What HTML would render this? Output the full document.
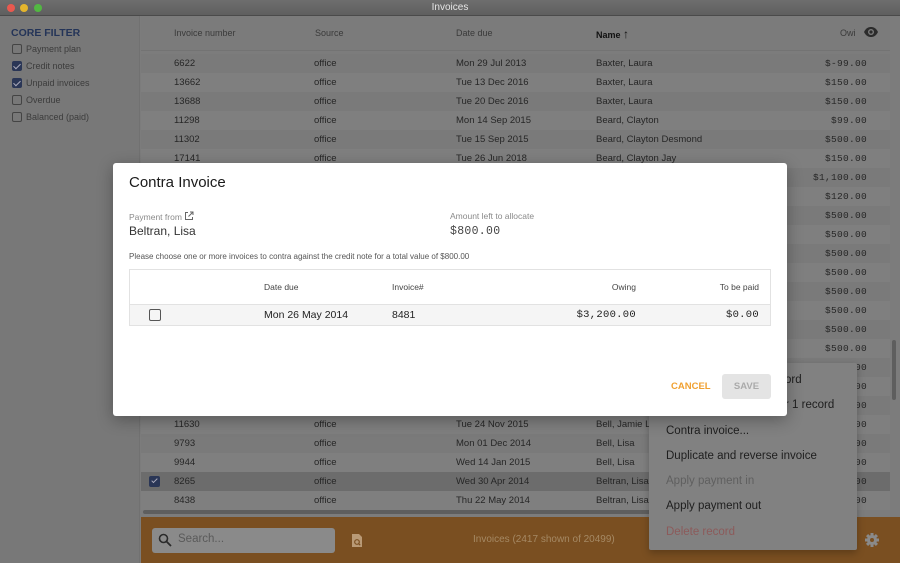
<!DOCTYPE html>
<html><head><meta charset="utf-8"><style>
*{margin:0;padding:0;box-sizing:border-box}
body{width:900px;height:563px;overflow:hidden;background:#7c7c7c;font-family:"Liberation Sans",sans-serif;position:relative;color:#2b2b2b}
.title{position:absolute;left:0;top:0;width:900px;height:16px;background:linear-gradient(#6e6e6e,#5f5f5f);color:#e6e6e6;font-size:10px;text-align:center;line-height:16px;border-bottom:1px solid #4a4a4a}
.dot{position:absolute;top:4px;width:8px;height:8px;border-radius:50%}
.side{position:absolute;left:0;top:16px;width:140px;height:547px;background:#787878;border-right:1px solid #717171}
.side h4{position:absolute;left:11px;top:11px;font-size:10.5px;color:#243458;font-weight:bold}
.cb{position:absolute;left:12px;width:10px;height:10px;border:1px solid #444;border-radius:2px}
.cb.on{background:#2a3656;border-color:#2a3656}
.cb.on:after{content:"";position:absolute;left:2px;top:0px;width:3px;height:6px;border:solid #aab;border-width:0 1.5px 1.5px 0;transform:rotate(45deg)}
.fl{position:absolute;left:26px;font-size:9px;color:#3c3c3c}
.main{position:absolute;left:141px;top:16px;width:749px;height:500px}
.hd{position:absolute;top:0;left:0;width:749px;height:35px;background:#7b7b7b;border-bottom:1px solid #737373;font-size:9px;color:#3a3a3a}
.hd span,.r span{position:absolute}
.r{position:absolute;left:0;width:749px;height:19px;font-size:9.5px;line-height:19px;color:#262626}
.mono{font-family:"Liberation Mono",monospace;letter-spacing:.3px}
.bar{position:absolute;left:141px;top:517px;width:759px;height:46px;background:#7a4f21}
.modal{position:absolute;left:113px;top:163px;width:674px;height:253px;background:#fff;border-radius:3px;box-shadow:0 4px 16px rgba(0,0,0,.3)}
.menu{position:absolute;left:649px;top:363px;width:208px;height:187px;background:#818181;box-shadow:0 3px 8px rgba(0,0,0,.25);border-radius:2px}
.mi{position:absolute;left:17px;font-size:11.5px;color:#1e1e1e}
</style></head><body>
<div class="title">Invoices<div class="dot" style="left:7px;background:#e9594f"></div><div class="dot" style="left:20px;background:#e4b52d"></div><div class="dot" style="left:34px;background:#52b842"></div></div>
<div class="side"><h4>CORE FILTER</h4>
<div class="cb" style="top:28px"></div><div class="fl" style="top:28px">Payment plan</div>
<div class="cb on" style="top:45px"></div><div class="fl" style="top:45px">Credit notes</div>
<div class="cb on" style="top:62px"></div><div class="fl" style="top:62px">Unpaid invoices</div>
<div class="cb" style="top:79px"></div><div class="fl" style="top:79px">Overdue</div>
<div class="cb" style="top:96px"></div><div class="fl" style="top:96px">Balanced (paid)</div>
</div>
<div class="main">
<div class="hd"><span style="left:33px;top:12px">Invoice number</span><span style="left:174px;top:12px">Source</span><span style="left:315px;top:12px">Date due</span><span style="left:455px;top:11px;color:#111;font-weight:bold">Name <span style="position:static;font-size:12px;font-weight:normal">&#8593;</span></span><span style="left:699px;top:12px">Owi</span>
<svg style="position:absolute;left:722px;top:10px" width="16" height="12" viewBox="0 0 16 12"><path d="M1 6C3 2 5.5 1 8 1s5 1 7 5c-2 4-4.5 5-7 5S3 10 1 6z" fill="#2b2b2b"/><circle cx="8" cy="6" r="3" fill="#7b7b7b"/><circle cx="8" cy="6" r="1.6" fill="#2b2b2b"/></svg></div>
<div id="rows"></div>
<div style="position:absolute;left:2px;top:494px;width:600px;height:4px;border-radius:2px;background:#5e5e5e"></div>
</div>
<div style="position:absolute;left:892px;top:340px;width:4px;height:60px;border-radius:2px;background:#5e5e5e"></div>
<script>
var d=[["6622","office","Mon 29 Jul 2013","Baxter, Laura","$-99.00"],["13662","office","Tue 13 Dec 2016","Baxter, Laura","$150.00"],["13688","office","Tue 20 Dec 2016","Baxter, Laura","$150.00"],["11298","office","Mon 14 Sep 2015","Beard, Clayton","$99.00"],["11302","office","Tue 15 Sep 2015","Beard, Clayton Desmond","$500.00"],["17141","office","Tue 26 Jun 2018","Beard, Clayton Jay","$150.00"],["","","","","$1,100.00"],["","","","","$120.00"]];
for(var i=0;i<8;i++)d.push(["","","","","$500.00"]);
for(i=0;i<3;i++)d.push(["","","","","$500.00"]);
d.push(["11630","office","Tue 24 Nov 2015","Bell, Jamie L","$500.00"],["9793","office","Mon 01 Dec 2014","Bell, Lisa","$500.00"],["9944","office","Wed 14 Jan 2015","Bell, Lisa","$500.00"],["8265","office","Wed 30 Apr 2014","Beltran, Lisa","$500.00"],["8438","office","Thu 22 May 2014","Beltran, Lisa","$500.00"]);
var h="";for(i=0;i<d.length;i++){var bg=i==22?"#6c6c6c":(i%2?"#7f7f7f":"#7a7a7a");
h+='<div class="r" style="top:'+(38+19*i)+'px;background:'+bg+'">'+(i==22?'<span style="left:8px;top:4px;width:11px;height:11px;background:#2a3656;border-radius:2px"></span><span style="left:12px;top:5px;width:3px;height:6px;border:solid #aab;border-width:0 1.5px 1.5px 0;transform:rotate(45deg)"></span>':'')+'<span style="left:33px">'+d[i][0]+'</span><span style="left:173px">'+d[i][1]+'</span><span style="left:315px">'+d[i][2]+'</span><span style="left:455px">'+d[i][3]+'</span><span class="mono" style="right:23px">'+d[i][4]+'</span></div>';}
document.getElementById("rows").innerHTML=h;
</script>
<div class="bar">
<div style="position:absolute;left:11px;top:11px;width:183px;height:25px;background:#8a8a8a;border-radius:3px"></div>
<svg style="position:absolute;left:17px;top:16px" width="14" height="14" viewBox="0 0 14 14"><circle cx="5.5" cy="5.5" r="4" fill="none" stroke="#2a2a2a" stroke-width="1.6"/><path d="M8.5 8.5L13 13" stroke="#2a2a2a" stroke-width="1.8"/></svg>
<div style="position:absolute;left:37px;top:16px;font-size:11.5px;color:#5a5a5a">Search...</div>
<svg style="position:absolute;left:210px;top:16px" width="12" height="15" viewBox="0 0 12 15"><path d="M1 1h7l3 3v10H1z" fill="#b99a76"/><circle cx="6" cy="9" r="2.3" fill="none" stroke="#7a4f21" stroke-width="1.2"/><path d="M7.6 10.6l1.6 1.6" stroke="#7a4f21" stroke-width="1.2"/></svg>
<div style="position:absolute;left:332px;top:17px;font-size:10px;color:#a58964">Invoices (2417 shown of 20499)</div>
<svg style="position:absolute;left:723px;top:15px" width="16" height="16" viewBox="0 0 16 16"><g fill="#8a8a8a"><circle cx="8" cy="8" r="5"/><rect x="6.5" y="1" width="3" height="14"/><rect x="1" y="6.5" width="14" height="3"/><rect x="6.5" y="1" width="3" height="14" transform="rotate(45 8 8)"/><rect x="6.5" y="1" width="3" height="14" transform="rotate(-45 8 8)"/></g><circle cx="8" cy="8" r="2" fill="#7a4f21"/></svg>
</div>
<div class="menu">
<div class="mi" style="top:11px;left:136px">ord</div>
<div class="mi" style="top:36px;left:136px">r 1 record</div>
<div class="mi" style="top:62px">Contra invoice...</div>
<div class="mi" style="top:87px">Duplicate and reverse invoice</div>
<div class="mi" style="top:112px;color:#5f5f5f">Apply payment in</div>
<div class="mi" style="top:137px">Apply payment out</div>
<div class="mi" style="top:163px;color:#8c5a5a">Delete record</div>
</div>
<div class="modal">
<div style="position:absolute;left:16px;top:11px;font-size:15px;color:#1a1a1a;font-weight:500">Contra Invoice</div>
<div style="position:absolute;left:16px;top:48px;font-size:8.5px;color:#8a8a8a">Payment from <svg width="10" height="10" viewBox="0 0 10 10" style="vertical-align:-1px"><path d="M4 1.5H1.5v7h7V6M6 1h3v3M9 1L4.5 5.5" fill="none" stroke="#666" stroke-width="1"/></svg></div>
<div style="position:absolute;left:16px;top:61px;font-size:12px;color:#333">Beltran, Lisa</div>
<div style="position:absolute;left:337px;top:48px;font-size:8.5px;color:#8a8a8a">Amount left to allocate</div>
<div class="mono" style="position:absolute;left:337px;top:62px;font-size:11.5px;color:#444">$800.00</div>
<div style="position:absolute;left:16px;top:89px;font-size:8px;color:#555">Please choose one or more invoices to contra against the credit note for a total value of $800.00</div>
<div style="position:absolute;left:16px;top:106px;width:642px;height:57px;border:1px solid #e2e2e2">
<div style="position:absolute;left:0;top:0;width:640px;height:35px;border-bottom:1px solid #e2e2e2;font-size:8.5px;color:#444">
<span style="position:absolute;left:134px;top:12px">Date due</span><span style="position:absolute;left:262px;top:12px">Invoice#</span><span style="position:absolute;right:134px;top:12px">Owing</span><span style="position:absolute;right:11px;top:12px">To be paid</span></div>
<div style="position:absolute;left:0;top:35px;width:640px;height:20px;background:#f5f5f5;font-size:10.5px;color:#222;line-height:20px">
<span style="position:absolute;left:19px;top:4px;width:12px;height:12px;border:1.5px solid #555;border-radius:2px"></span>
<span style="position:absolute;left:134px">Mon 26 May 2014</span><span style="position:absolute;left:262px">8481</span><span class="mono" style="position:absolute;right:134px">$3,200.00</span><span class="mono" style="position:absolute;right:11px">$0.00</span></div></div>
<div style="position:absolute;left:558px;top:218px;font-size:9.5px;font-weight:bold;color:#f0a030">CANCEL</div>
<div style="position:absolute;left:609px;top:211px;width:49px;height:25px;background:#e4e4e4;border-radius:3px;font-size:9.5px;font-weight:bold;color:#aaa;text-align:center;line-height:25px">SAVE</div>
</div>
</body></html>
